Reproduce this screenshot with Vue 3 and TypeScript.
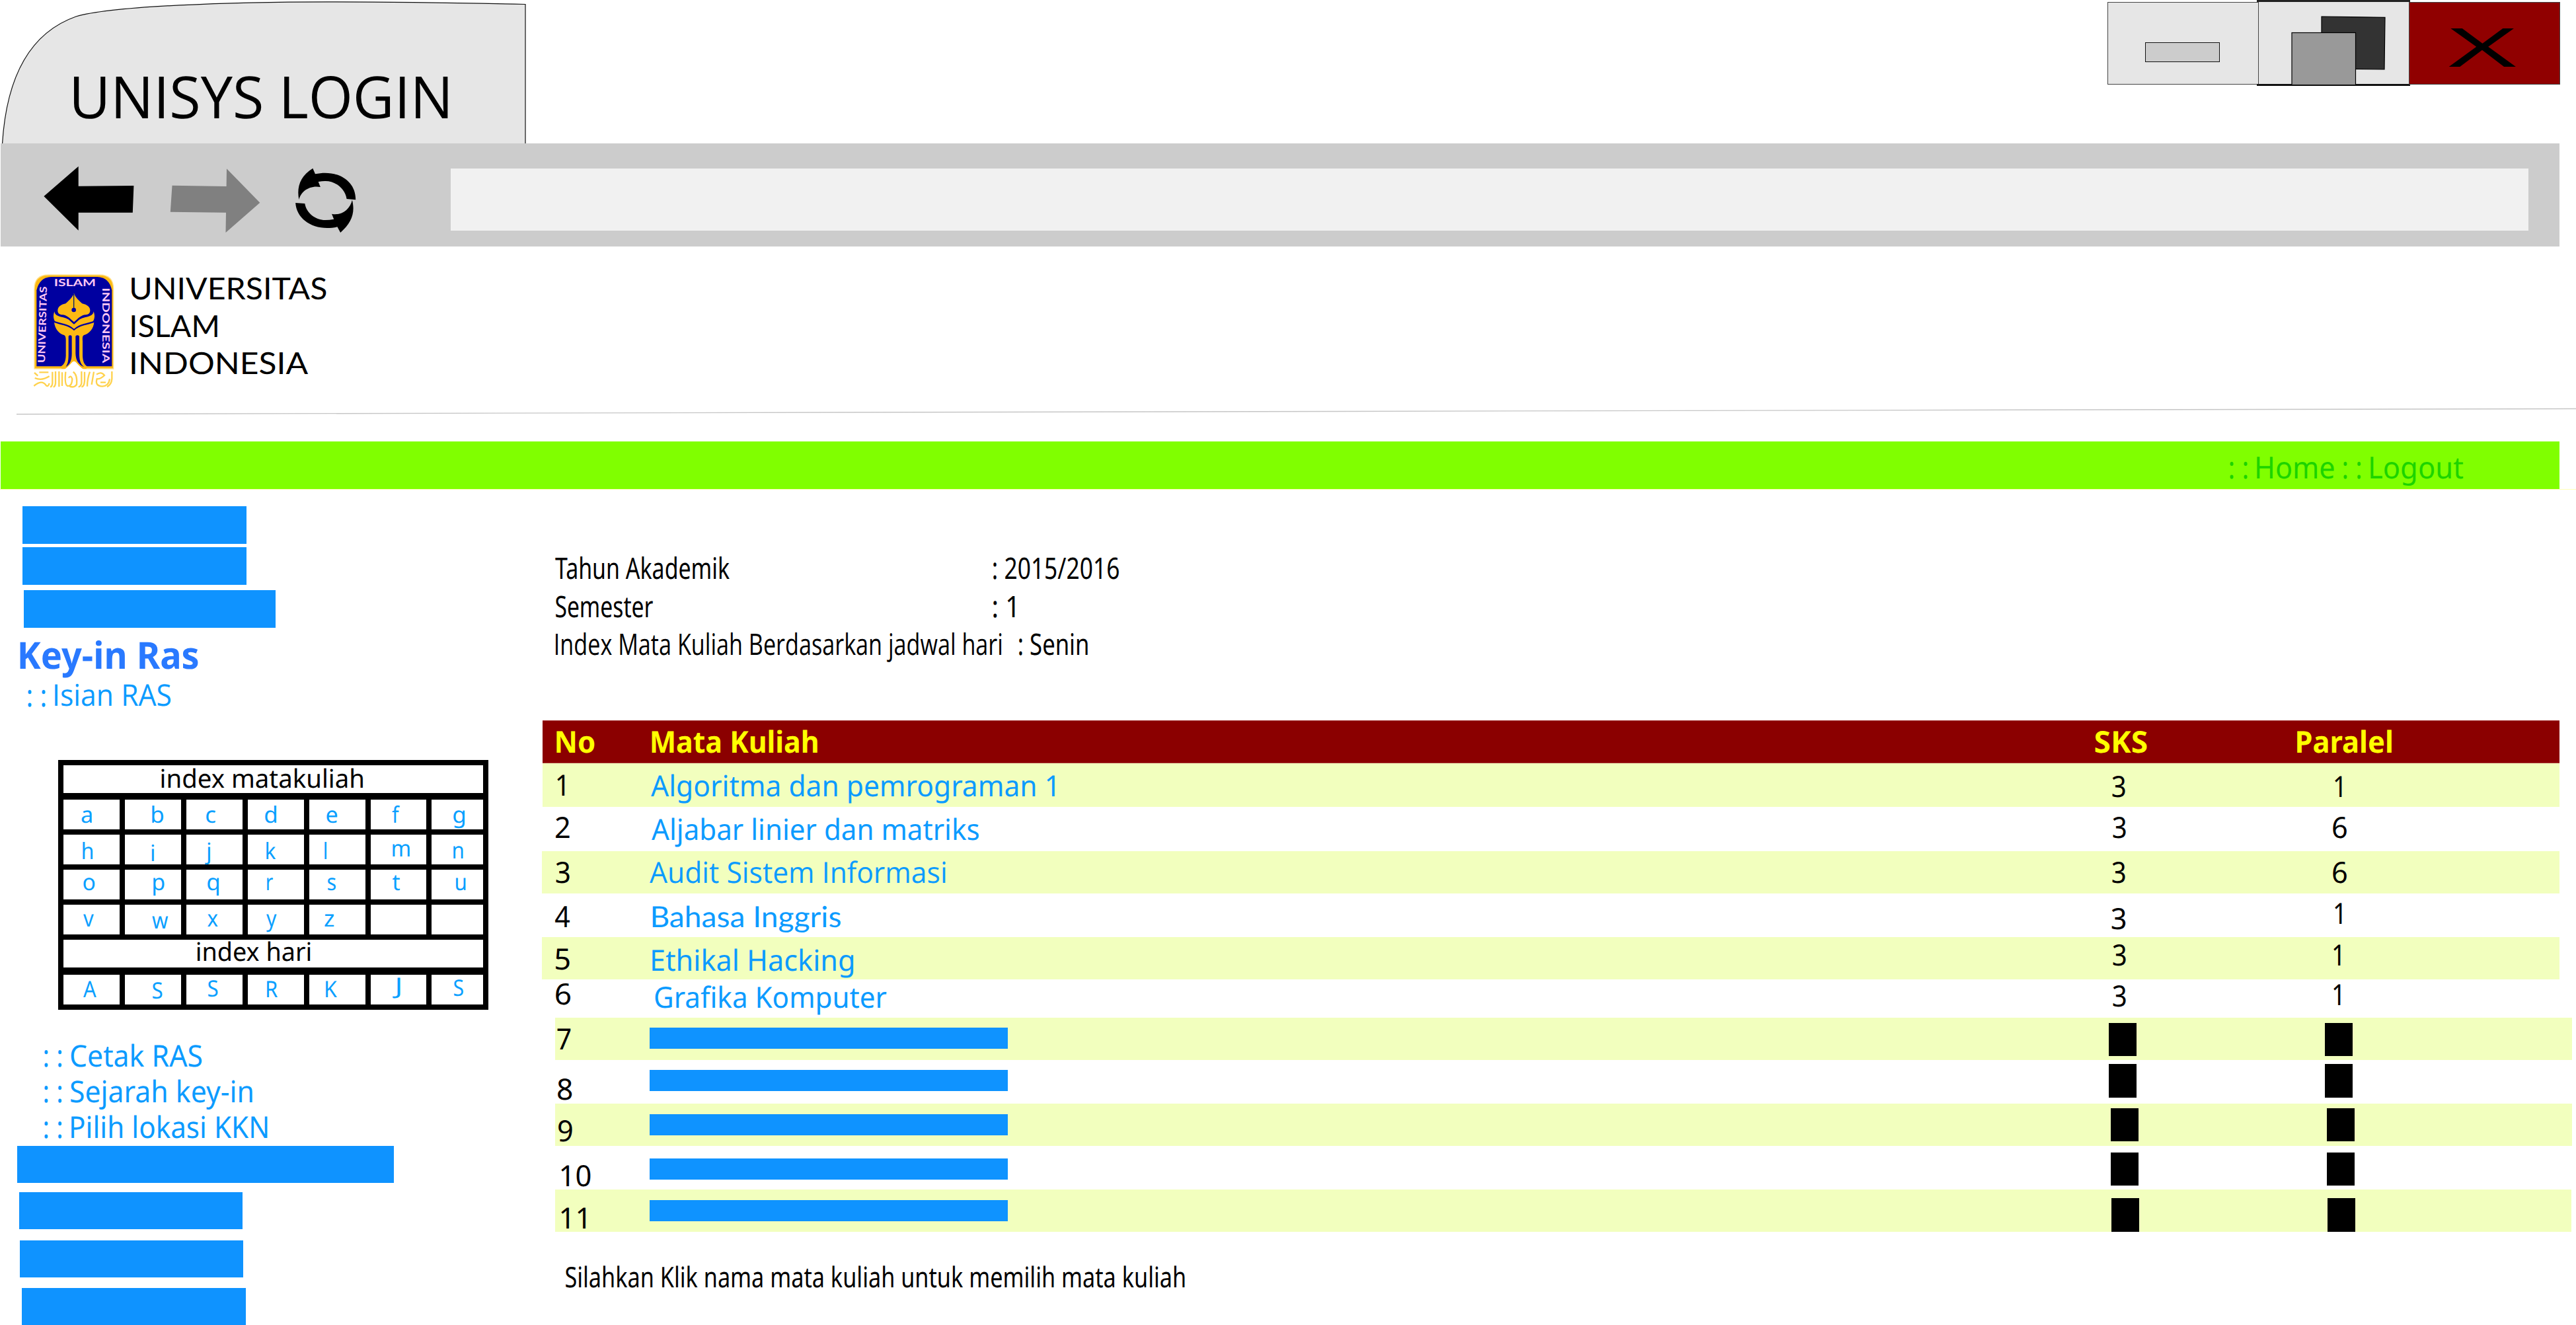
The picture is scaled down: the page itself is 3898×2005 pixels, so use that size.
<script setup lang="ts">
import { defineComponent, h } from 'vue'

const ctx = document.createElement('canvas').getContext('2d')!

/* One line of text whose ink fills exactly `w` pixels and whose box is the cap height. */
const Fit = defineComponent({
  props: {
    text: { type: String, required: true },
    w: { type: Number, required: true },
    cap: { type: Number, default: 32 },
    weight: { type: Number, default: 400 },
    font: { type: String, default: 'Noto Sans' },
  },
  setup(props) {
    return () => {
      const size = props.cap / 0.714
      ctx.font = `${props.weight} 400px "${props.font}"`
      const m = ctx.measureText(props.text)
      const unit = size / 400
      const ink = (m.actualBoundingBoxRight + m.actualBoundingBoxLeft) * unit
      const scale = props.w / ink
      const shift = m.actualBoundingBoxLeft * unit * scale
      return h(
        'span',
        { style: { display: 'block', width: `${props.w}px`, height: `${props.cap}px`, flex: 'none' } },
        [
          h(
            'span',
            {
              style: {
                display: 'inline-block',
                verticalAlign: 'top',
                whiteSpace: 'pre',
                fontFamily: `"${props.font}", sans-serif`,
                fontSize: `${size}px`,
                fontWeight: props.weight,
                lineHeight: `${props.cap}px`,
                transformOrigin: '0 0',
                transform: `translate(${shift}px, ${-size * 0.004}px) scaleX(${scale})`,
              },
            },
            props.text,
          ),
        ],
      )
    }
  },
})

type Letter = [ch: string, x: number, w: number, base: number]

const letterRows: Letter[][] = [
  [['a', 27, 15.6, 35.7], ['b', 40.9, 17, 35.7], ['c', 29.8, 14.2, 35.7], ['d', 26.2, 17, 35.7], ['e', 25.7, 16, 35.7], ['f', 31.7, 12, 35.7], ['g', 33, 17, 35.7]],
  [['h', 29.3, 15.2, 38], ['i', 40.4, 4.1, 40.7], ['j', 28, 8.3, 38], ['k', 27.5, 14.3, 38], ['l', 23.4, 3.2, 38], ['m', 33, 25.7, 33.7], ['n', 32.6, 14.7, 36.7]],
  [['o', 30.3, 17.4, 32], ['p', 42.7, 16.5, 32], ['q', 32.1, 17, 32], ['r', 29.4, 9.2, 32], ['s', 28, 12, 32], ['t', 33, 11, 32], ['u', 36.7, 14.7, 32]],
  [['v', 29.8, 16, 34], ['w', 41.3, 24.3, 36.7], ['x', 31.7, 15.6, 34], ['y', 28, 15.6, 34], ['z', 23.4, 14.2, 34], ['', 0, 0, 34], ['', 0, 0, 34]],
]
const dayRow: Letter[] = [
  ['A', 30.3, 19.7, 34.3], ['S', 41.8, 14.7, 37], ['S', 33, 14.7, 33.7], ['R', 29.4, 16, 34.3], ['K', 25.3, 17, 34.3], ['J', 33, 11.5, 29.7], ['S', 33.5, 14.2, 32.7],
]

interface Ink { t: string; x: number; w: number; base: number; font?: string }
interface Block { x: number; y: number }
interface Row {
  h: number
  left?: number
  right?: number
  no: Ink
  name?: Ink
  sks?: Ink
  par?: Ink
  bar?: number
  sq?: [Block, Block]
}

const TABLE_TOP = 1155
const ink = (t: string, x: number, w: number, base: number, font?: string): Ink => ({ t, x, w, base, font })

const source: Row[] = [
  { h: 66, left: 821, right: 3873, no: ink('1', 843.4, 11.3, 1204), name: ink('Algoritma dan pemrograman 1', 984.8, 611, 1205), sks: ink('3', 3196, 19.5, 1205.7), par: ink('1', 3533.2, 10.5, 1205.7) },
  { h: 67, no: ink('2', 841, 21, 1268), name: ink('Aljabar linier dan matriks', 986.3, 495, 1270.7), sks: ink('3', 3197, 19.5, 1267.7), par: ink('6', 3529.8, 21, 1267.7) },
  { h: 64, left: 820, right: 3872.5, no: ink('3', 841, 20.5, 1336), name: ink('Audit Sistem Informasi', 983.3, 448, 1336, 'Open Sans'), sks: ink('3', 3196, 19.5, 1335.7), par: ink('6', 3529.8, 21, 1335.7) },
  { h: 66, no: ink('4', 840, 22.5, 1403), name: ink('Bahasa Inggris', 986.5, 285.2, 1403, 'Lato'), sks: ink('3', 3194.7, 21, 1405.7), par: ink('1', 3533.2, 10.5, 1398) },
  { h: 64, left: 820, right: 3872.5, no: ink('5', 841, 20.5, 1467), name: ink('Ethikal Hacking', 986.8, 304, 1468.6), sks: ink('3', 3197, 19.5, 1460.7), par: ink('1', 3530.9, 10.5, 1460.7) },
  { h: 58, no: ink('6', 840.5, 22.3, 1520), name: ink('Grafika Komputer', 991.3, 350.8, 1525), sks: ink('3', 3197, 19.5, 1522.7), par: ink('1', 3530.9, 10.5, 1521) },
  { h: 64, left: 840, right: 3892, no: ink('7', 842.7, 20.5, 1587.5), bar: 1555.5, sq: [{ x: 3191.3, y: 1548 }, { x: 3517.8, y: 1548 }] },
  { h: 66, no: ink('8', 844.3, 21.5, 1664), bar: 1619.8, sq: [{ x: 3191.3, y: 1610.5 }, { x: 3517.8, y: 1610.5 }] },
  { h: 64, left: 839.5, right: 3891.5, no: ink('9', 844.8, 21, 1727), bar: 1686, sq: [{ x: 3194.2, y: 1677 }, { x: 3520.6, y: 1677 }] },
  { h: 66, no: ink('10', 849, 44.6, 1794.5), bar: 1753.4, sq: [{ x: 3194.2, y: 1744 }, { x: 3520.6, y: 1744 }] },
  { h: 64, left: 839.5, right: 3891, no: ink('11', 849, 37, 1859), bar: 1816.3, sq: [{ x: 3194.7, y: 1813.7 }, { x: 3521.8, y: 1813.7 }] },
]

let cursor = TABLE_TOP
const rows = source.map((r) => {
  const top = cursor
  cursor += r.h
  return { ...r, top }
})

const CAP = 31.5
const COL = { name: 980, sks: 3180, par: 3500 }

const rowStyle = (r: Row) => {
  const left = r.left ?? 820
  const right = r.right ?? 3873
  return {
    height: `${r.h}px`,
    marginLeft: `${left - 820}px`,
    width: `${right - left}px`,
    gridTemplateColumns: `${COL.name - left}px 2200px 320px 1fr`,
  }
}
const at = (i: Ink, col: number, top: number) => ({
  marginLeft: `${i.x - col}px`,
  marginTop: `${i.base - CAP - top}px`,
})
const block = (b: Block, col: number, top: number) => ({
  marginLeft: `${b.x - col}px`,
  marginTop: `${b.y - top}px`,
})
</script>

<template>
  <div class="page">
    <header class="titlebar">
      <div class="tab">
        <svg class="tab-shape" viewBox="0 0 800 217" width="800" height="217">
          <path d="M3.5 218 C8 145 30 55 115 25 C170 9 350 2.8 497 2.8 C600 2.8 700 4.5 795 6.5 V218Z" fill="#e6e6e6" stroke="#111" stroke-width="1.2" />
        </svg>
        <Fit class="tab-title" font="Open Sans" text="UNISYS LOGIN" :w="566.5" :cap="63" />
      </div>
      <div class="controls">
        <div class="ctl"><i class="dash"></i></div>
        <div class="ctl restore">
          <svg viewBox="0 0 228 125" width="228" height="125">
            <path d="M96 22 L192 23.3 L191 102 L96 101Z" fill="#333" stroke="#000" stroke-width="1.2" />
            <rect x="51" y="46.5" width="96.5" height="79" fill="#999" stroke="#000" stroke-width="1.2" />
          </svg>
        </div>
        <div class="ctl close"><Fit text="X" :w="104" :cap="58" /></div>
      </div>
    </header>

    <div class="toolbar">
      <svg viewBox="0 0 600 156" width="600" height="156">
        <g transform="translate(-1 -217)">
          <path d="M66.4 297 L118.7 251.7 V281.7 L202.4 281 L200.8 321.7 H118.7 V348.7Z" fill="#000" />
          <path d="M393.3 306.7 L343 255.3 L342.6 282 L260.5 280.7 L257.8 320.7 L342 321.7 L341.5 352Z" fill="#808080" />
          <g transform="scale(.523 .33333)" fill="#000">
            <path d="M905 764 L912 790 C975 768 1030 820 1029 907 L1003 903 C998 850 965 820 940 822 Q932 822 921 825 L927 849 C895 840 870 870 865 907 C858 850 868 800 905 764Z" />
            <path d="M985 1056 L976 1030 C912 1052 858 1000 855 921 L882 924 C887 970 915 1000 942 999 Q953 999 966 995 L960 971 C990 980 1012 950 1019 908 C1028 965 1018 1010 985 1056Z" />
          </g>
        </g>
      </svg>
      <div class="address"></div>
    </div>

    <section class="brand">
      <div class="brand-row">
        <svg class="logo" viewBox="0 0 450 600" width="150" height="200">
          <path d="M36 474 V112 Q36 48 100 48 H332 Q395 48 395 112 V474Z" fill="#fdb913" stroke="#ffe08a" stroke-width="4" />
          <path d="M46 463 V118 Q60 58 112 57 H322 Q375 58 388 118 V463Z" fill="#0000a0" />
          <path d="M216 131 C222 152 240 164 253 178 C275 182 291 195 289 212 C288 222 281 228 270 229 C248 230 236 245 216 262 C196 245 184 230 162 229 C151 228 143 222 142 212 C141 195 155 182 178 178 C192 164 208 152 216 131Z" fill="#fdb913" />
          <path d="M127 214 C128 233 152 238 172 242 C192 246 203 262 216 272 C229 262 240 246 260 242 C280 238 304 233 305 214 C312 234 309 248 303 258 C280 268 242 268 216 293 C190 268 152 268 129 258 C122 246 121 232 127 214Z" fill="#fdb913" />
          <path d="M126 264 C156 276 190 276 216 301 C242 276 276 276 307 264 C304 294 285 314 262 321 C252 324 255 340 255 352 V415 C256 440 262 455 276 464 L272 474 H160 L156 464 C172 455 178 440 179 415 V352 C179 340 180 324 170 321 C147 314 130 294 126 264Z" fill="#fdb913" />
          <path d="M191 326 Q198 318 206 326 V405 C206 435 198 455 178 466 C190 450 191 430 191 405Z M223 326 Q232 318 240 326 V405 C240 432 244 452 262 466 C236 456 224 435 223 405Z" fill="#0000a0" />
          <path d="M168 480 C200 458 206 440 216 440 C226 440 232 458 264 480Z" fill="#fff" />
          <path d="M215 134 V200" stroke="#06206a" stroke-width="4" />
          <circle cx="215" cy="207" r="10" fill="#0000a0" />
          <g font-family="Lato, sans-serif" font-weight="700" font-size="45" fill="#ffc8f4">
            <text x="125" y="100" textLength="190" lengthAdjust="spacingAndGlyphs">ISLAM</text>
            <text transform="translate(84 448) rotate(-88.5)" textLength="348" lengthAdjust="spacingAndGlyphs">UNIVERSITAS</text>
            <text transform="translate(344 106) rotate(90)" textLength="342" lengthAdjust="spacingAndGlyphs">INDONESIA</text>
          </g>
          <g fill="none" stroke="#ffd24d" stroke-width="7">
            <path d="M36 492 L52 506 M58 490 H100 M38 516 Q70 530 104 508 M34 552 Q70 522 88 548 Q98 560 104 540 M118 488 V540 Q116 556 108 556 M132 486 V540 Q130 556 122 556 M148 486 V556 M162 490 V552 M178 488 Q172 545 186 552 Q206 556 208 520 Q200 500 192 516 M212 488 Q232 500 228 546 Q216 562 196 554 M250 486 V540 Q246 556 236 556 M264 488 V530 Q262 556 250 556 M288 488 Q276 520 276 554 M306 488 L296 546 M318 500 Q340 484 354 504 Q336 522 320 520 Q310 552 344 554 Q374 552 378 520 M388 486 V520 Q386 546 366 556 M336 536 H360" />
          </g>
        </svg>
        <div class="brand-name">
          <Fit font="Lato" text="UNIVERSITAS" :w="294.4" :cap="32.7" />
          <Fit font="Lato" text="ISLAM" :w="130" :cap="32.7" />
          <Fit font="Lato" text="INDONESIA" :w="267.8" :cap="32.7" />
        </div>
      </div>
      <svg class="rule" viewBox="0 0 3898 12" width="3898" height="12">
        <path d="M25 9.7 L3898 1.5" stroke="#c6c6c6" stroke-width="1.4" />
      </svg>
    </section>

    <nav class="nav">
      <Fit text=": :" :w="26.7" :cap="32.7" />
      <Fit text="Home" :w="116.6" :cap="32.7" style="margin-left: 15.2px" />
      <Fit text=": :" :w="26.3" :cap="32.7" style="margin-left: 14.2px" />
      <Fit text="Logout" :w="140.2" :cap="32.7" style="margin-left: 14.7px" />
    </nav>

    <div class="main">
      <aside class="side">
        <div class="bar b1"></div>
        <div class="bar b2"></div>
        <div class="bar b3"></div>
        <Fit class="keyin" text="Key-in Ras" :w="270" :cap="40.3" :weight="700" />
        <div class="link isian">
          <Fit text=": :" :w="26.7" :cap="32.4" /><Fit font="Open Sans" text="Isian RAS" :w="175.7" :cap="32.4" />
        </div>

        <div class="index">
          <div class="index-title"><Fit text="index matakuliah" :w="305.3" :cap="27.7" class="t1" /></div>
          <div v-for="(r, i) in letterRows" :key="i" class="letters">
            <div v-for="(l, j) in r" :key="j" class="cell">
              <Fit v-if="l[0]" :text="l[0]" :w="l[2]" :cap="24.5" :style="{ marginLeft: l[1] + 'px', marginTop: l[3] - 24.5 + 'px' }" />
            </div>
          </div>
          <div class="index-title hari"><Fit text="index hari" :w="171.7" :cap="27.7" class="t2" /></div>
          <div class="letters">
            <div v-for="(l, j) in dayRow" :key="j" class="cell">
              <Fit :text="l[0]" :w="l[2]" :cap="24.5" :style="{ marginLeft: l[1] + 'px', marginTop: l[3] - 24.5 + 'px' }" />
            </div>
          </div>
        </div>

        <div class="menu">
          <div class="link"><Fit text=": :" :w="26.2" :cap="32.4" /><Fit text="Cetak RAS" :w="198.7" :cap="32.4" /></div>
          <div class="link"><Fit text=": :" :w="26.2" :cap="32.4" /><Fit text="Sejarah key-in" :w="275" :cap="32.4" /></div>
          <div class="link"><Fit text=": :" :w="26.2" :cap="32.4" /><Fit text="Pilih lokasi KKN" :w="296.6" :cap="32.4" style="margin-left: 1px" /></div>
        </div>
        <div class="bar b4"></div>
        <div class="bar b5"></div>
        <div class="bar b6"></div>
        <div class="bar b7"></div>
      </aside>

      <section class="content">
        <div class="info">
          <div class="info-row"><Fit text="Tahun Akademik" :w="264.2" style="margin-left: -0.8px" /><Fit text=": 2015/2016" :w="190" style="margin-left: 398.6px" /></div>
          <div class="info-row"><Fit text="Semester" :w="147.3" /><Fit text=": 1" :w="32.5" style="margin-left: 514.7px" /></div>
          <div class="info-row"><Fit font="Open Sans" text="Index Mata Kuliah Berdasarkan jadwal hari" :w="675" /><Fit text=": Senin" :w="104" style="margin-left: 26.3px" /></div>
        </div>

        <div class="thead">
          <Fit text="No" :w="57.4" :cap="32.5" :weight="700" style="margin-left: 20.5px" />
          <Fit text="Mata Kuliah" :w="251.3" :cap="32.5" :weight="700" style="margin-left: 87.3px" />
          <Fit text="SKS" :w="78.5" :cap="32.5" :weight="700" style="margin-left: 1932.6px" />
          <Fit text="Paralel" :w="143.2" :cap="32.5" :weight="700" style="margin-left: 227.9px" />
        </div>
        <div v-for="(r, i) in rows" :key="i" class="row" :class="{ odd: i % 2 === 0 }" :style="rowStyle(r)">
          <div><Fit :text="r.no.t" :w="r.no.w" :cap="CAP" :style="at(r.no, r.left ?? 820, r.top)" /></div>
          <div class="name">
            <Fit v-if="r.name" :text="r.name.t" :font="r.name.font" :w="r.name.w" :cap="CAP" :style="at(r.name, COL.name, r.top)" />
            <div v-if="r.bar" class="masked" :style="{ marginTop: r.bar - r.top + 'px' }"></div>
          </div>
          <div>
            <Fit v-if="r.sks" :text="r.sks.t" :w="r.sks.w" :cap="CAP" :style="at(r.sks, COL.sks, r.top)" />
            <div v-if="r.sq" class="square" :style="block(r.sq[0], COL.sks, r.top)"></div>
          </div>
          <div>
            <Fit v-if="r.par" :text="r.par.t" :w="r.par.w" :cap="CAP" :style="at(r.par, COL.par, r.top)" />
            <div v-if="r.sq" class="square" :style="block(r.sq[1], COL.par, r.top)"></div>
          </div>
        </div>

        <Fit class="hint" text="Silahkan Klik nama mata kuliah untuk memilih mata kuliah" :w="937" :cap="30.7" />
      </section>
    </div>
  </div>
</template>

<style>
body {
  margin: 0;
  background: #fff;
}
</style>

<style scoped>
.page {
  width: 3898px;
  height: 2005px;
  overflow: hidden;
  background: #fff;
  color: #000;
  font-family: 'Noto Sans', sans-serif;
  text-rendering: geometricPrecision;
}
.page * {
  box-sizing: border-box;
}
svg {
  display: block;
  flex: none;
}
.titlebar {
  display: flex;
  justify-content: space-between;
  height: 217px;
  padding-right: 24.5px;
}
.tab {
  display: grid;
}
.tab > * {
  grid-area: 1 / 1;
}
.tab-title {
  margin: 114px 0 0 111px;
}
.controls {
  display: flex;
  align-items: flex-start;
}
.ctl {
  width: 228.3px;
  height: 125px;
  margin-top: 2.5px;
  border: 1.5px solid #444;
  border-right: 0;
  background: #e6e6e6;
}
.dash {
  display: block;
  width: 113px;
  height: 30px;
  margin: 60.5px 0 0 56px;
  border: 1.3px solid #111;
  background: #ccc;
}
.restore {
  width: 232px;
  height: 130px;
  margin: 0 -2px 0 -2px;
  padding-left: 2px;
  border: 0;
  border-top: 3px solid #222;
  border-bottom: 3px solid #111;
  background: linear-gradient(90deg, #fff0 2px, #444 2px, #444 3.5px, #e6e6e6 3.5px);
}
.close {
  padding: 37.5px 0 0 58.5px;
  border-right: 1.5px solid #444;
  background: #900000;
}
.toolbar {
  display: flex;
  align-items: flex-start;
  width: 3872px;
  height: 156px;
  margin-left: 1px;
  background: #ccc;
}
.address {
  width: 3144px;
  height: 93.5px;
  margin: 38px 0 0 80.5px;
  background: #f1f1f1;
}
.brand {
  height: 295px;
}
.brand-row {
  display: flex;
  height: 244px;
  padding: 27px 0 0 40px;
}
.brand-name {
  display: flex;
  flex-direction: column;
  gap: 23.9px;
  padding: 20.2px 0 0 9.3px;
}
.nav {
  display: flex;
  width: 3872px;
  height: 71.7px;
  margin-left: 1px;
  padding: 23.3px 0 0 3372.6px;
  background: #80ff00;
  color: #1cd400;
}
.main {
  display: flex;
  height: 1265px;
  border-top: 1px solid #ffffb8;
}
.side {
  width: 820px;
  height: 1264px;
  overflow: hidden;
}
.bar {
  width: 338.5px;
  height: 56.5px;
  background: #0f93ff;
}
.b1 {
  margin: 25.5px 0 0 34px;
}
.b2 {
  margin: 5.5px 0 0 34px;
}
.b3 {
  width: 381px;
  margin: 8.5px 0 0 36px;
}
.keyin {
  margin: 21.5px 0 0 29.8px;
  color: #2979ff;
}
.link {
  display: flex;
  color: #0c9bff;
}
.isian {
  gap: 14.7px;
  margin: 25px 0 0 41.8px;
}
.index {
  width: 651px;
  height: 378px;
  margin: 81px 0 0 88px;
  padding: 8px 8px 0;
  background: #000;
}
.index-title {
  height: 42px;
  margin-bottom: 10px;
  background: #fff;
}
.index-title.hari {
  margin-bottom: 11px;
}
.t1,
.t2 {
  display: inline-block !important;
  vertical-align: top;
}
.t1 {
  margin: 7px 0 0 147.7px;
}
.t2 {
  margin: 5px 0 0 202.3px;
}
.letters {
  display: grid;
  grid-template-columns: repeat(5, 85px) 84px 78px;
  column-gap: 8px;
  height: 45px;
  margin-bottom: 8px;
}
.cell {
  display: flex;
  align-items: flex-start;
  background: #fff;
  color: #0aa0ff;
}
.menu {
  display: flex;
  flex-direction: column;
  gap: 21.3px;
  margin: 53.3px 0 0 66.9px;
}
.menu .link {
  gap: 14px;
}
.b4 {
  width: 570px;
  margin: 12.8px 0 0 26px;
}
.b5 {
  margin: 13.5px 0 0 28.8px;
}
.b6 {
  margin: 16.5px 0 0 29.8px;
}
.b7 {
  margin: 15.5px 0 0 33.3px;
}
.content {
  width: 3078px;
}
.info {
  display: flex;
  flex-direction: column;
  height: 349px;
  padding: 103px 0 0 20.8px;
}
.info-row {
  display: flex;
  height: 58px;
}
.info-row:nth-child(2) {
  height: 57px;
}
.thead {
  display: flex;
  width: 3052px;
  height: 65px;
  margin-left: 1px;
  padding-top: 15.3px;
  border: solid #a83838;
  border-width: 1px 0;
  background: #8b0000;
  color: #ff0;
}
.row {
  display: grid;
}
.row > div {
  display: flex;
  align-items: flex-start;
}
.row.odd {
  background: #f2ffbe;
}
.name {
  color: #0c9bff;
}
.masked {
  width: 542px;
  height: 32px;
  margin-left: 2.5px;
  background: #0f93ff;
}
.square {
  width: 42px;
  height: 50.7px;
  background: #000;
}
.hint {
  margin: 53.8px 0 0 36px;
}
</style>
